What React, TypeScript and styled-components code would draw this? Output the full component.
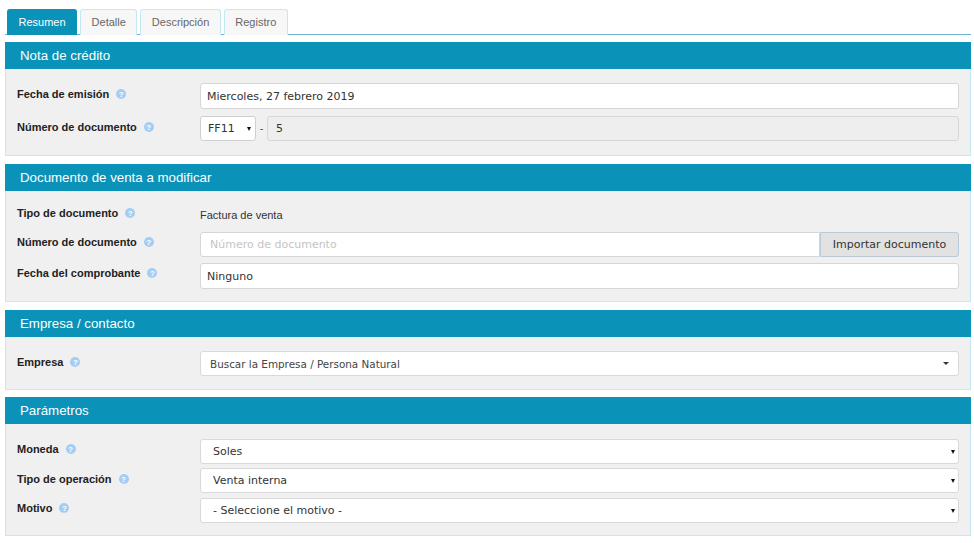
import { ReactNode } from 'react';
import styled, { createGlobalStyle } from 'styled-components';

const GlobalStyle = createGlobalStyle`
  html, body {
    margin: 0;
    padding: 0;
    background: #fff;
    font-family: "Liberation Sans", Arial, sans-serif;
    color: #333;
  }
`;

const TABS = ['Resumen', 'Detalle', 'Descripción', 'Registro'];

const HelpIcon = () => (
  <HelpBadge>?</HelpBadge>
);

type RowProps = { label: string; children: ReactNode; height: number; labelHeight?: number };

const FieldRow = ({ label, children, height, labelHeight = 22 }: RowProps) => (
  <Row $height={height}>
    <Label $height={labelHeight}>
      {label}
      <HelpIcon />
    </Label>
    <Control>{children}</Control>
  </Row>
);

const SelectBox = ({ value, narrow }: { value: string; narrow?: boolean }) => (
  <SelectWrap $narrow={narrow}>
    <NativeSelect $narrow={narrow} defaultValue={value}>
      <option>{value}</option>
    </NativeSelect>
  </SelectWrap>
);

const App = () => {
  return (
    <Page>
      <GlobalStyle />
      <TabBar>
        {TABS.map((tab, i) => (
          <Tab key={tab} $active={i === 0}>
            {tab}
          </Tab>
        ))}
      </TabBar>

      <Section $top={7}>
        <SectionTitle>Nota de crédito</SectionTitle>
        <SectionBody $pad="14px 11px 14px 11px">
          <FieldRow label="Fecha de emisión" height={26}>
            <TextInput readOnly value="Miercoles, 27 febrero 2019" />
          </FieldRow>
          <RowGap $size={7} />
          <FieldRow label="Número de documento" height={25}>
            <SelectBox value="FF11" narrow />
            <Dash>-</Dash>
            <TextInput $disabled readOnly value="5" />
          </FieldRow>
        </SectionBody>
      </Section>

      <Section $top={8}>
        <SectionTitle>Documento de venta a modificar</SectionTitle>
        <SectionBody $pad="10px 11px 12px 11px">
          <FieldRow label="Tipo de documento" height={31} labelHeight={24}>
            <StaticValue>Factura de venta</StaticValue>
          </FieldRow>
          <FieldRow label="Número de documento" height={25} labelHeight={20}>
            <TextInput $joined placeholder="Número de documento" />
            <ImportButton>Importar documento</ImportButton>
          </FieldRow>
          <RowGap $size={6} />
          <FieldRow label="Fecha del comprobante" height={26} labelHeight={20}>
            <TextInput readOnly value="Ninguno" />
          </FieldRow>
        </SectionBody>
      </Section>

      <Section $top={8}>
        <SectionTitle>Empresa / contacto</SectionTitle>
        <SectionBody $pad="14px 11px 13px 11px">
          <FieldRow label="Empresa" height={25}>
            <Combo>
              <span>Buscar la Empresa / Persona Natural</span>
              <ComboCaret />
            </Combo>
          </FieldRow>
        </SectionBody>
      </Section>

      <Section $top={7}>
        <SectionTitle>Parámetros</SectionTitle>
        <SectionBody $pad="15px 11px 12px 11px">
          <FieldRow label="Moneda" height={25} labelHeight={20}>
            <SelectBox value="Soles" />
          </FieldRow>
          <RowGap $size={4} />
          <FieldRow label="Tipo de operación" height={25}>
            <SelectBox value="Venta interna" />
          </FieldRow>
          <RowGap $size={5} />
          <FieldRow label="Motivo" height={25} labelHeight={20}>
            <SelectBox value="- Seleccione el motivo -" />
          </FieldRow>
        </SectionBody>
      </Section>
    </Page>
  );
};

export default App;

const Page = styled.div`
  width: 974px;
  height: 543px;
  overflow: hidden;
  box-sizing: border-box;
  padding: 9px 3px 0 5px;
`;

const TabBar = styled.div`
  display: flex;
  gap: 3px;
  height: 26px;
  box-sizing: border-box;
  padding-left: 2px;
  border-bottom: 1px solid #6fb3d9;
`;

const Tab = styled.div<{ $active?: boolean }>`
  box-sizing: border-box;
  height: 26px;
  padding: 0 10.5px 1px;
  display: flex;
  align-items: center;
  font-size: 11px;
  border-radius: 3px 3px 0 0;
  color: ${p => (p.$active ? '#fff' : '#666')};
  background: ${p => (p.$active ? '#0a92b8' : '#f7f7f7')};
  border: 1px solid ${p => (p.$active ? '#0a92b8' : '#c5e8f3')};
  border-bottom: none;
`;

const Section = styled.section<{ $top: number }>`
  margin-top: ${p => p.$top}px;
`;

const SectionTitle = styled.h2`
  margin: 0;
  height: 27px;
  box-sizing: border-box;
  padding: 0 0 0 15px;
  background: #0a92b8;
  color: #fff;
  font-size: 13.3px;
  font-weight: 400;
  line-height: 28px;
`;

const SectionBody = styled.div<{ $pad: string }>`
  background: #f0f0f0;
  border: 1px solid #c5e8f3;
  border-top: none;
  padding: ${p => p.$pad};
`;

const Row = styled.div<{ $height: number }>`
  display: grid;
  grid-template-columns: 183px 1fr;
  height: ${p => p.$height}px;
`;

const RowGap = styled.div<{ $size: number }>`
  height: ${p => p.$size}px;
`;

const Label = styled.div<{ $height: number }>`
  display: flex;
  align-items: center;
  height: ${p => p.$height}px;
  font-size: 11px;
  font-weight: 700;
  color: #222;
`;

const HelpBadge = styled.span`
  display: inline-flex;
  align-items: center;
  justify-content: center;
  width: 10px;
  height: 10px;
  margin-left: 7px;
  border-radius: 50%;
  background: #a5cdf3;
  color: #fff;
  font-size: 8px;
  font-weight: 700;
`;

const Control = styled.div`
  display: flex;
  align-items: stretch;
  min-width: 0;
`;

const fieldFont = `"DejaVu Sans", Verdana, sans-serif`;

const TextInput = styled.input<{ $disabled?: boolean; $joined?: boolean }>`
  flex: 1;
  min-width: 0;
  box-sizing: border-box;
  padding: 0 ${p => (p.$disabled ? '8px' : '6px')};
  font-family: ${fieldFont};
  font-size: 11px;
  color: #333;
  background: ${p => (p.$disabled ? '#eeeeee' : '#fff')};
  border: 1px solid #d6d6d6;
  border-radius: ${p => (p.$joined ? '3px 0 0 3px' : '3px')};
  outline: none;
  &::placeholder {
    color: #c4c4c4;
    padding-left: 3px;
  }
`;

const SelectWrap = styled.div<{ $narrow?: boolean }>`
  position: relative;
  display: flex;
  flex: ${p => (p.$narrow ? '0 0 56px' : '1')};
  &::after {
    content: '';
    position: absolute;
    top: 50%;
    right: ${p => (p.$narrow ? '5px' : '4px')};
    margin-top: -2px;
    border-left: 2.5px solid transparent;
    border-right: 2.5px solid transparent;
    border-top: 4px solid #111;
    pointer-events: none;
  }
`;

const NativeSelect = styled.select<{ $narrow?: boolean }>`
  appearance: none;
  flex: 1;
  width: 100%;
  box-sizing: border-box;
  padding: 0 0 0 ${p => (p.$narrow ? '7px' : '12px')};
  font-family: ${fieldFont};
  font-size: 11px;
  color: #333;
  background: #fff;
  border: 1px solid ${p => (p.$narrow ? '#cfcfcf' : '#d9d9d9')};
  border-radius: 3px;
`;

const Dash = styled.span`
  width: 11px;
  text-align: center;
  font-size: 11px;
  line-height: 25px;
  color: #555;
`;

const StaticValue = styled.div`
  font-size: 11px;
  color: #333;
  line-height: 28px;
`;

const ImportButton = styled.button`
  width: 139px;
  box-sizing: border-box;
  padding: 0;
  font-family: ${fieldFont};
  font-size: 11px;
  color: #333;
  background: #e2e2e2;
  border: 1px solid #b9c9d6;
  border-radius: 0 3px 3px 0;
`;

const Combo = styled.div`
  flex: 1;
  box-sizing: border-box;
  display: flex;
  align-items: center;
  justify-content: space-between;
  padding: 0 9px 0 9px;
  background: #fff;
  border: 1px solid #d9d9d9;
  border-radius: 3px;
  font-family: ${fieldFont};
  font-size: 10.4px;
  color: #444;
`;

const ComboCaret = styled.span`
  width: 0;
  height: 0;
  border-left: 3px solid transparent;
  border-right: 3px solid transparent;
  border-top: 3px solid #333;
`;
